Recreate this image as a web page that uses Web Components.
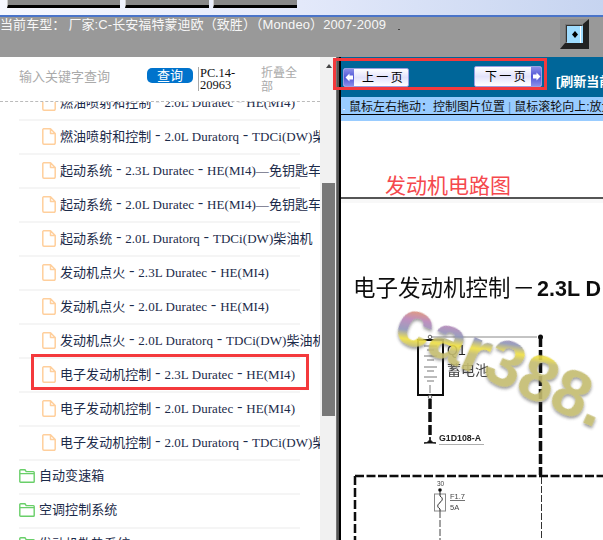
<!DOCTYPE html>
<html lang="zh">
<head>
<meta charset="utf-8">
<title>电路图</title>
<style>
  html, body { margin: 0; width: 603px; height: 540px; overflow: hidden; background: #fff; }
  body { font-family: "Liberation Sans", "Noto Sans CJK SC", sans-serif; }
  app-page { width: 603px; height: 540px; }
</style>
</head>
<body>
<app-page>
  <tree-row slot="tree" kind="file" text="燃油喷射和控制－2.0L Duratec－HE(MI4)"></tree-row>
  <tree-row slot="tree" kind="file" text="燃油喷射和控制－2.0L Duratorq－TDCi(DW)柴油机"></tree-row>
  <tree-row slot="tree" kind="file" text="起动系统－2.3L Duratec－HE(MI4)—免钥匙车型"></tree-row>
  <tree-row slot="tree" kind="file" text="起动系统－2.0L Duratec－HE(MI4)—免钥匙车型"></tree-row>
  <tree-row slot="tree" kind="file" text="起动系统－2.0L Duratorq－TDCi(DW)柴油机"></tree-row>
  <tree-row slot="tree" kind="file" text="发动机点火－2.3L Duratec－HE(MI4)"></tree-row>
  <tree-row slot="tree" kind="file" text="发动机点火－2.0L Duratec－HE(MI4)"></tree-row>
  <tree-row slot="tree" kind="file" text="发动机点火－2.0L Duratorq－TDCi(DW)柴油机"></tree-row>
  <tree-row slot="tree" kind="file" text="电子发动机控制－2.3L Duratec－HE(MI4)"></tree-row>
  <tree-row slot="tree" kind="file" text="电子发动机控制－2.0L Duratec－HE(MI4)"></tree-row>
  <tree-row slot="tree" kind="file" text="电子发动机控制－2.0L Duratorq－TDCi(DW)柴油机"></tree-row>
  <tree-row slot="tree" kind="folder" text="自动变速箱"></tree-row>
  <tree-row slot="tree" kind="folder" text="空调控制系统"></tree-row>
  <tree-row slot="tree" kind="folder" text="发动机散热系统"></tree-row>
</app-page>

<script>
class TopChrome extends HTMLElement {
  constructor() {
    super();
    this.attachShadow({ mode: "open" });
    this.shadowRoot.innerHTML = `<style>
      :host { display: flex; height: 15px; padding-left: 7px; gap: 5px; box-sizing: content-box;
        background: linear-gradient(90deg, #f6f8ff, #e6ebfb 45%, #c6d4f0);
        border-bottom: 2px solid #4a74c9; }
      i { display: block; height: 5px; background: #888; border-bottom: 3px solid #000; border-left: 1px solid #ccc; box-sizing: content-box; }
    </style>
    <i style="width:112px"></i><i style="width:83px;margin-right:-1px"></i><i style="width:83px"></i>`;
  }
}

class ModelBar extends HTMLElement {
  constructor() {
    super();
    this.attachShadow({ mode: "open" });
    this.shadowRoot.innerHTML = `<style>
      :host { display: flex; height: 40px; background: #999; color: #f7f7f7; font-size: 13px; line-height: 16px; }
      .t { white-space: nowrap; width: 398px; letter-spacing: .08px; }
      .t span { margin-left: 3px; }
      .dot { width: 2px; height: 1px; background: #444; margin-top: 12px; }
      .btn { margin: 2px 0 0 160px; width: 29px; height: 30px; box-sizing: border-box; background: #777;
        border: solid; border-width: 5px 6px 6px 5px; border-color: #8c8c8c #222 #222 #8c8c8c; padding: 2px 0 0 2px; }
      .btn div { height: 17px; width: 16px; background: #9fdcff; box-shadow: -1px -1px 0 #333; }
      svg { display: block; }
    </style>
    <div class="t">当前车型：<span>厂家:C-长安福特蒙迪欧（致胜）（Mondeo）2007-2009</span></div>
    <div class="dot"></div>
    <div class="btn"><div><svg width="16" height="17" viewBox="0 0 16 17"><path d="M5 8.500 8 5 11 8.500 8 12Z" fill="#000"/><path d="M13.500 0V17" stroke="#fff" stroke-width="1"/></svg></div></div>`;
  }
}

class SearchHead extends HTMLElement {
  constructor() {
    super();
    this.attachShadow({ mode: "open" });
    this.shadowRoot.innerHTML = `<style>
      :host { display: flex; height: 44px; box-sizing: content-box; padding-left: 19px; background: #fff;
        border-bottom: 1px dashed #bbb; font-size: 13px; color: #aaa; position: relative; }
      .in { width: 128px; padding-top: 12px; line-height: 16px; white-space: nowrap; }
      .go { width: 46px; height: 15px; margin-top: 11px; background: #0073cc; color: #fff; border-radius: 5px;
        text-align: center; line-height: 15px; }
      .code { width: 42px; margin: 10px 0 0 5px; padding-left: 1px; box-sizing: border-box; border-left: 1px solid #aaa; height: 24px;
        font: 12.5px/12px "Liberation Serif", "Noto Sans CJK SC", serif; color: #111; }
      .fold { width: 38px; margin: 9px 0 0 21px; font-size: 12px; line-height: 14px; color: #aaa; }
    </style>
    <div class="in">输入关键字查询</div>
    <div class="go">查询</div>
    <div class="code">PC.14-20963</div>
    <div class="fold">折叠全部</div>`;
  }
}

const ICONS = {
  file: `<svg width="14" height="17" viewBox="0 0 14 17"><path d="M1.500 .8H8.500L13.200 5.500V15a1.200 1.200 0 0 1-1.200 1.200H2A1.200 1.200 0 0 1 .8 15V1.500ZM8.500 .8V5.500H13.200" fill="#fff" stroke="#ffcf9c" stroke-width="1.500" stroke-linejoin="round"/></svg>`,
  folder: `<svg width="16" height="14" viewBox="0 0 16 14"><path d="M.8 12V1.600A.8.8 0 0 1 1.600 .8H6L7.200 2.600H14.400A.8.8 0 0 1 15.200 3.400V12.400A.8.8 0 0 1 14.400 13.200H1.600A.8.8 0 0 1 .8 12.400ZM.8 4.600H15.200" fill="#fff" stroke="#69cf69" stroke-width="1.400"/></svg>`
};

class TreeRow extends HTMLElement {
  constructor() {
    super();
    this.attachShadow({ mode: "open" });
  }
  connectedCallback() {
    const kind = this.getAttribute("kind");
    const label = this.getAttribute("text").replace(/－/g, '<span class="d">-</span>');
    this.shadowRoot.innerHTML = `<style>
      :host { display: block; margin-left: 19px; width: 281px; height: 32px; border-bottom: 2px solid #f5f5f5; }
      .r { display: flex; align-items: center; box-sizing: border-box; height: 32px; padding-bottom: 2px; white-space: nowrap; color: #1c2b4a;
        font: 13px/16px "Liberation Serif", "Noto Sans CJK SC", serif; letter-spacing: .06px; }
      .r.file { padding-left: 23px; }
      .r svg { margin-right: 4px; flex: none; }
      .d { display: inline-block; width: 13px; text-align: center; font-family: "Noto Sans CJK SC", sans-serif; font-size: 16px; line-height: 12px; vertical-align: 1px; }
    </style>
    <div class="r ${kind}">${ICONS[kind]}<span>${label}</span></div>`;
  }
}

class SideBar extends HTMLElement {
  constructor() {
    super();
    this.attachShadow({ mode: "open" });
    this.shadowRoot.innerHTML = `<style>
      :host { display: flex; width: 341px; flex: none; height: 100%; background: #fff; }
      .col { width: 320px; display: flex; flex-direction: column; overflow: hidden; }
      .list { flex: 1; overflow: hidden; }
      .inner { margin-top: -15px; }
      .bar { width: 16px; background: #f1f1f1; }
      .arrow { width: 0; height: 0; margin: 7px 0 0 6px; border: 3px solid transparent; border-top: 0; border-bottom: 4px solid #444; }
      .thumb { width: 13px; height: 233px; margin: 115px 0 0 2px; background: #787878; }
      .rule { width: 5px; background: linear-gradient(90deg, #777 0 1px, #555 1px 3px, #000 3px); }
    </style>
    <div class="col">
      <search-head></search-head>
      <div class="list"><div class="inner"><slot></slot></div></div>
    </div>
    <div class="bar"><div class="arrow"></div><div class="thumb"></div></div>
    <div class="rule"></div>`;
  }
}

class NavBtn extends HTMLElement {
  constructor() {
    super();
    this.attachShadow({ mode: "open" });
  }
  connectedCallback() {
    const next = this.hasAttribute("next");
    const cap = `<b class="cap"><svg width="9" height="9" viewBox="0 0 9 9"><path d="${next ? "M1 2.500H4.500V.5L8.500 4.500 4.500 8.500V6.500H1Z" : "M8 2.500H4.500V.5L.5 4.500 4.500 8.500V6.500H8Z"}" fill="#fff"/></svg></b>`;
    this.shadowRoot.innerHTML = `<style>
      :host { display: flex; flex: none; align-items: stretch; box-sizing: border-box; border: 1px solid #9a9ee0; border-radius: 2px;
        background: linear-gradient(180deg, #fff, #e2e2fb 50%, #fff); color: #000; font-size: 12px; line-height: 16px; overflow: hidden; }
      .cap { width: 10px; flex: none; background: linear-gradient(180deg, #8a8ee8, #4f55d6 50%, #8a8ee8); display: flex; align-items: center; justify-content: center; }
      .t { flex: 1; white-space: nowrap; align-self: center; word-spacing: -1px; }
    </style>
    ${next ? "" : cap}<div class="t" style="padding-left:${next ? 10 : 8}px"><slot></slot></div>${next ? cap : ""}`;
  }
}

class ViewPane extends HTMLElement {
  constructor() {
    super();
    this.attachShadow({ mode: "open" });
    this.shadowRoot.innerHTML = `<style>
      :host { display: flex; flex-direction: column; flex: 1; min-width: 0; height: 100%; overflow: hidden; background: #fff; }
      .nav { height: 40px; flex: none; background: #006699; display: flex; white-space: nowrap; }
      nav-btn.a { width: 66px; height: 19px; margin: 11px 0 0 2px; }
      nav-btn.b { width: 68px; height: 21px; margin: 9px 0 0 65px; }
      .fresh { flex: none; margin: 17px 0 0 14px; color: #fff; font-weight: bold; font-size: 13px; line-height: 16px; }
      .hint { height: 24px; flex: none; box-sizing: border-box; background: #99ccff; white-space: nowrap; overflow: hidden; }
      .hint div { border-bottom: 1px solid #000; padding-left: 8px; font-size: 12px; line-height: 20px; color: #111; height: 17px; display: flex; }
      .hint i { flex: none; width: 2px; height: 1px; background: #eef; margin: 12px 4px 0 -6px; }
      .hint span { color: #5b86b8; margin: 0 3px; }
      .draw { flex: 1; position: relative; }
    </style>
    <div class="nav">
      <nav-btn class="a">上 一 页</nav-btn>
      <nav-btn class="b" next>下 一 页</nav-btn>
      <div class="fresh">[刷新当前</div>
    </div>
    <div class="hint"><div><i></i>鼠标左右拖动：控制图片位置<span>|</span>鼠标滚轮向上:放大</div></div>
    <div class="draw"><wiring-sheet></wiring-sheet></div>`;
  }
}

class WiringSheet extends HTMLElement {
  constructor() {
    super();
    this.attachShadow({ mode: "open" });
    // svg origin = page (341,121), viewBox keeps page coords
    this.shadowRoot.innerHTML = `<style>
      :host { display: block; }
      svg { display: block; }
      text { font-family: "Liberation Sans", "Noto Sans CJK SC", sans-serif; }
    </style>
    <svg width="262" height="419" viewBox="341 121 262 419">
      <defs>
        <linearGradient id="wm" gradientUnits="userSpaceOnUse" x1="0" y1="-46" x2="14" y2="2">
          <stop offset="0" stop-color="#c9a67e"/><stop offset=".2" stop-color="#f0964e"/>
          <stop offset=".48" stop-color="#b884b8"/><stop offset=".7" stop-color="#8f95b8"/><stop offset=".88" stop-color="#f0e040"/><stop offset="1" stop-color="#c4bc70"/>
        </linearGradient>
        <filter id="soft" x="-10%" y="-10%" width="120%" height="120%"><feGaussianBlur stdDeviation=".45"/></filter>
        <filter id="wmf" x="-10%" y="-30%" width="120%" height="160%">
          <feGaussianBlur in="SourceGraphic" stdDeviation=".7" result="b"/>
          <feDropShadow in="b" dx="1" dy="2" stdDeviation="1.500" flood-color="#444" flood-opacity=".6"/>
        </filter>
      </defs>
      <text x="385" y="193" font-size="21" fill="#f5484d">发动机电路图</text>
      <rect x="341" y="197" width="262" height="2" fill="#555"/>
      <rect x="341" y="199" width="262" height="4" fill="#f8f8f8"/>
      <g filter="url(#soft)">
        <text x="353" y="296" font-size="22.500" fill="#111">电子发动机控制<tspan dx="2">－</tspan><tspan x="537" font-weight="bold" font-size="21.500">2.3L D</tspan></text>
        <path d="M431 337H537" stroke="#888" stroke-width="1"/>
        <path d="M540.500 337V475" stroke="#111" stroke-width="3.500" stroke-dasharray="10 3"/>
        <circle cx="540.500" cy="337" r="2.500" fill="#111"/>
        <rect x="418" y="340" width="25" height="55" fill="none" stroke="#111" stroke-width="2"/>
        <path d="M424 346H437M427 350H434M424 356H437M427 360H434M424 367H437M427 371H434M424 377H437M427 381H434M430 385V393" stroke="#777" stroke-width="1" fill="none"/>
        <circle cx="430" cy="337" r="1.800" fill="#fff" stroke="#666"/>
        <circle cx="430" cy="397" r="1.800" fill="#fff" stroke="#666"/>
        <path d="M430 399V438" stroke="#111" stroke-width="3.500" stroke-dasharray="10 3"/>
        <path d="M424 443Q430 443 430 437 430 443 436 443Z" fill="#111" stroke="#111"/>
        <text x="439" y="441" font-size="8.800" font-weight="bold" fill="#222">G1D108-A</text>
        <path d="M439 444.500H484" stroke="#999" stroke-width=".8"/>
        <text x="447" y="355" font-size="14" fill="#222">Q1</text>
        <text x="447" y="375" font-size="14" fill="#444">蓄电池</text>
        <path d="M355 476H603" stroke="#111" stroke-width="2.500" stroke-dasharray="9 2.500"/>
        <path d="M355 476V540" stroke="#111" stroke-width="2.500" stroke-dasharray="9 3"/>
        <path d="M541.500 477V540" stroke="#333" stroke-width="1" stroke-dasharray="7 2"/>
        <text x="437" y="486" font-size="6.500" fill="#444">30</text>
        <circle cx="440" cy="490" r="1.800" fill="#111"/>
        <rect x="434.500" y="494" width="11" height="17" fill="none" stroke="#888"/>
        <path d="M440 491V496C443 498 443 500 440 502.500 437 505 437 507 440 509V511" stroke="#222" fill="none"/>
        <text x="450" y="499" font-size="7.500" fill="#444" text-decoration="underline">F1.7</text>
        <text x="450" y="510" font-size="7.500" fill="#444">5A</text>
        <path d="M440 511V540" stroke="#444" stroke-dasharray="7 2"/>
      </g>
      <text transform="translate(391 337) rotate(24)" font-size="65" font-weight="bold" fill="url(#wm)" opacity=".9" filter="url(#wmf)">car388.</text>
    </svg>`;
  }
}

class AppPage extends HTMLElement {
  constructor() {
    super();
    this.attachShadow({ mode: "open" });
    this.shadowRoot.innerHTML = `<style>
      :host { display: flex; flex-direction: column; position: relative; overflow: hidden; }
      .main { display: flex; flex: 1; min-height: 0; }
      .mark { position: absolute; box-sizing: border-box; border: 3px solid #f4393c; pointer-events: none; }
    </style>
    <top-chrome></top-chrome>
    <model-bar></model-bar>
    <div class="main">
      <side-bar><slot name="tree"></slot></side-bar>
      <view-pane></view-pane>
    </div>
    <div class="mark" style="left:333px;top:58px;width:214px;height:32px"></div>
    <div class="mark" style="left:31px;top:354px;width:278px;height:36px"></div>`;
  }
}

customElements.define("top-chrome", TopChrome);
customElements.define("model-bar", ModelBar);
customElements.define("search-head", SearchHead);
customElements.define("tree-row", TreeRow);
customElements.define("side-bar", SideBar);
customElements.define("nav-btn", NavBtn);
customElements.define("wiring-sheet", WiringSheet);
customElements.define("view-pane", ViewPane);
customElements.define("app-page", AppPage);
</script>
</body>
</html>
